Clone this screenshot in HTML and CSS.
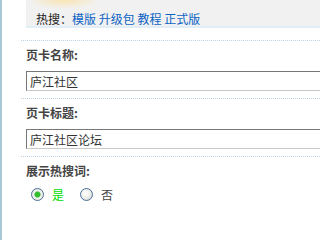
FILE: index.html
```html
<!DOCTYPE html>
<html lang="zh-CN">
<head>
<meta charset="utf-8">
<link rel="stylesheet" href="styles.css">
</head>
<body>
<div class="page">
  <div class="hotbar">
    <span class="hot-label">热搜：</span><a class="hot-link" href="#">模版</a> <a class="hot-link" href="#">升级包</a> <a class="hot-link" href="#">教程</a> <a class="hot-link" href="#">正式版</a>
  </div>
  <div class="section">
    <div class="label">页卡名称:</div>
    <div class="field"><input class="text-input" type="text" value="庐江社区"></div>
  </div>
  <div class="section">
    <div class="label">页卡标题:</div>
    <div class="field"><input class="text-input" type="text" value="庐江社区论坛"></div>
  </div>
  <div class="section section-last">
    <div class="label">展示热搜词:</div>
    <div class="radios">
      <span class="radio radio-on"></span><span class="opt opt-yes">是</span>
      <span class="radio"></span><span class="opt">否</span>
    </div>
  </div>
</div>
</body>
</html>
```
FILE: styles.css
```css
html, body {
  margin: 0;
  padding: 0;
  background: #fff;
  overflow: hidden;
}
body {
  font-family: "Noto Sans CJK SC", "Noto Sans", sans-serif;
  font-size: 12px;
}
.page {
  border-left: 2px solid #a9c8d6;
  min-height: 100vh;
  box-sizing: border-box;
}
.hotbar {
  margin-left: 24px;
  height: 28px;
  border-bottom: 2px solid #e2eef5;
  background:
    radial-gradient(ellipse 36px 9px at 38px 0px, rgba(250,228,175,0.95), rgba(250,235,200,0) 100%),
    #f1f1f1;
  padding: 12px 0 0 10px;
  box-sizing: border-box;
  line-height: 14px;
  white-space: nowrap;
  color: #222;
}
.hot-label {
  color: #222;
}
.hot-link {
  color: #0b63c4;
  text-decoration: none;
}
.section {
  margin: 12px 0 0 19px;
  border-top: 1px dotted #bcd3e3;
  padding: 7px 0 7px 5px;
}
.section + .section {
  margin-top: 0;
}
.label {
  font-weight: bold;
  color: #444;
  line-height: 14px;
  height: 14px;
}
.field {
  margin-top: 9px;
  height: 20px;
}
.text-input {
  display: block;
  width: 100%;
  height: 20px;
  box-sizing: border-box;
  margin: 0;
  padding: 0 3px;
  border: 1px solid #c8c8c8;
  border-top-color: #777;
  border-left-color: #777;
  border-right: 0;
  font-family: "Noto Sans CJK SC", "Noto Sans", sans-serif;
  font-size: 12px;
  color: #333;
  background: #fff;
  outline: none;
}
.radios {
  margin-top: 10px;
  display: flex;
  align-items: center;
  height: 13px;
  padding-left: 5px;
}
.radio {
  width: 11px;
  height: 11px;
  border: 1px solid #48709a;
  border-radius: 50%;
  background: radial-gradient(circle at 40% 40%, #ffffff 0%, #f0f0ec 45%, #cfcfc8 100%);
  flex: none;
}
.radio-on {
  background: radial-gradient(circle at 50% 50%, #2fbf2f 0 2.5px, #8ad08a 3px, #f4f4f0 3.6px, #d8d8d2 100%);
}
.opt {
  margin-left: 8px;
  margin-right: 16px;
  color: #444;
  line-height: 13px;
}
.opt-yes {
  color: #00dd00;
}
```
